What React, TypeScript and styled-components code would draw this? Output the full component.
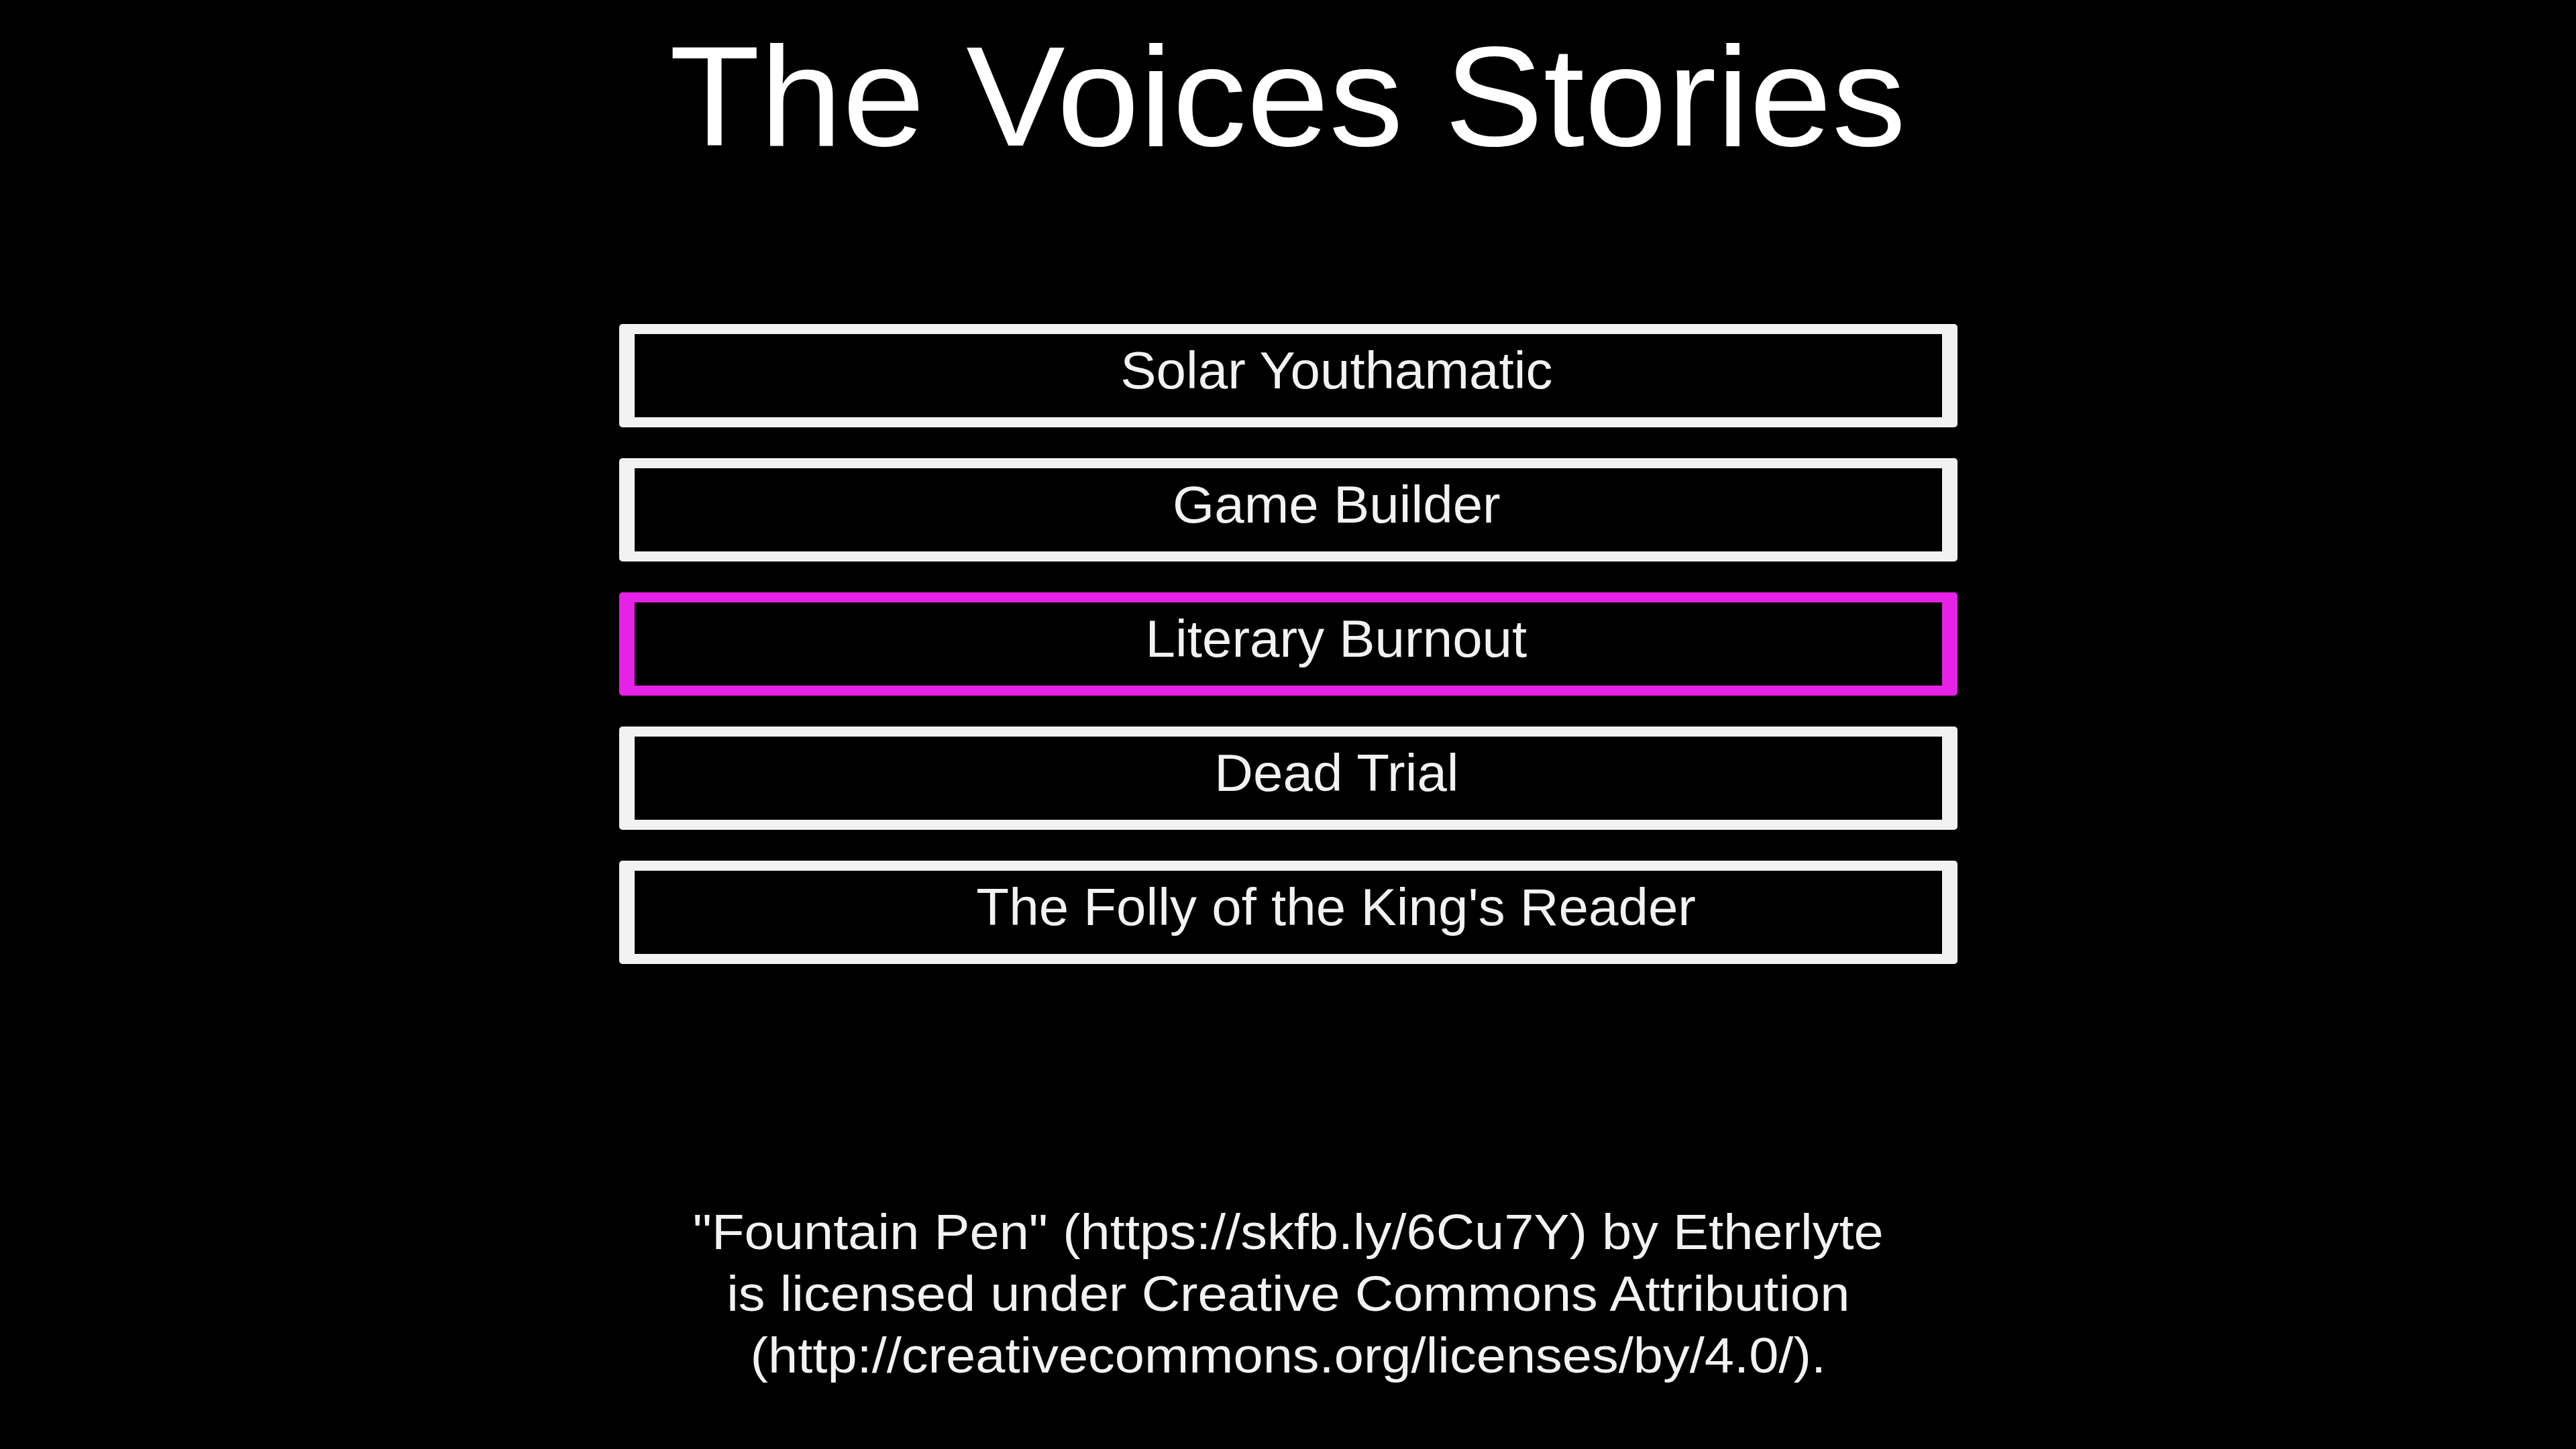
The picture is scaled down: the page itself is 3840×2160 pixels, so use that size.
import React from "react";
import styled, { createGlobalStyle } from "styled-components";

const GlobalStyle = createGlobalStyle`
  html, body {
    margin: 0;
    padding: 0;
    background: #000000;
  }
  #root {
    min-height: 2160px;
    background: #000000;
  }
`;

const Screen = styled.main`
  box-sizing: border-box;
  width: 3840px;
  height: 2160px;
  padding-top: 39px;
  display: flex;
  flex-direction: column;
  align-items: center;
  background: #000000;
  font-family: "Liberation Sans", Arial, sans-serif;
  overflow: hidden;
`;

const Title = styled.h1`
  margin: 0;
  font-size: 211px;
  line-height: 211px;
  font-weight: 400;
  color: #ffffff;
  text-align: center;
  white-space: nowrap;
  transform: scaleX(1.048);
  transform-origin: center;
`;

const Menu = styled.nav`
  margin-top: 233px;
  display: flex;
  flex-direction: column;
  gap: 46px;
  width: 1995px;
`;

const StoryButton = styled.button<{ $selected?: boolean }>`
  box-sizing: border-box;
  width: 100%;
  height: 154px;
  margin: 0;
  padding: 0 0 16px 144px;
  display: flex;
  align-items: center;
  justify-content: center;
  background: #000000;
  border-style: solid;
  border-width: 15px 23px;
  border-color: ${(p) => (p.$selected ? "#e622e6" : "#f2f2f2")};
  border-radius: 5px;
  cursor: pointer;
  font-family: "Liberation Sans", Arial, sans-serif;
`;

const StoryLabel = styled.span`
  display: inline-block;
  font-size: 77px;
  line-height: 77px;
  color: #f2f2f2;
  white-space: nowrap;
  transform: scaleX(1.038);
  transform-origin: center;
`;

const Credit = styled.p`
  margin: 354px 0 0;
  font-size: 74px;
  line-height: 92px;
  color: #f2f2f2;
  text-align: center;
  white-space: nowrap;
  transform: scaleX(1.074);
  transform-origin: center;
`;

const stories = [
  "Solar Youthamatic",
  "Game Builder",
  "Literary Burnout",
  "Dead Trial",
  "The Folly of the King's Reader",
];

export default function App() {
  return (
    <>
      <GlobalStyle />
      <Screen>
        <Title>The Voices Stories</Title>
        <Menu>
          {stories.map((s, i) => (
            <StoryButton key={s} $selected={i === 2}>
              <StoryLabel>{s}</StoryLabel>
            </StoryButton>
          ))}
        </Menu>
        <Credit>
          "Fountain Pen" (https://skfb.ly/6Cu7Y) by Etherlyte
          <br />
          is licensed under Creative Commons Attribution
          <br />
          (http://creativecommons.org/licenses/by/4.0/).
        </Credit>
      </Screen>
    </>
  );
}
